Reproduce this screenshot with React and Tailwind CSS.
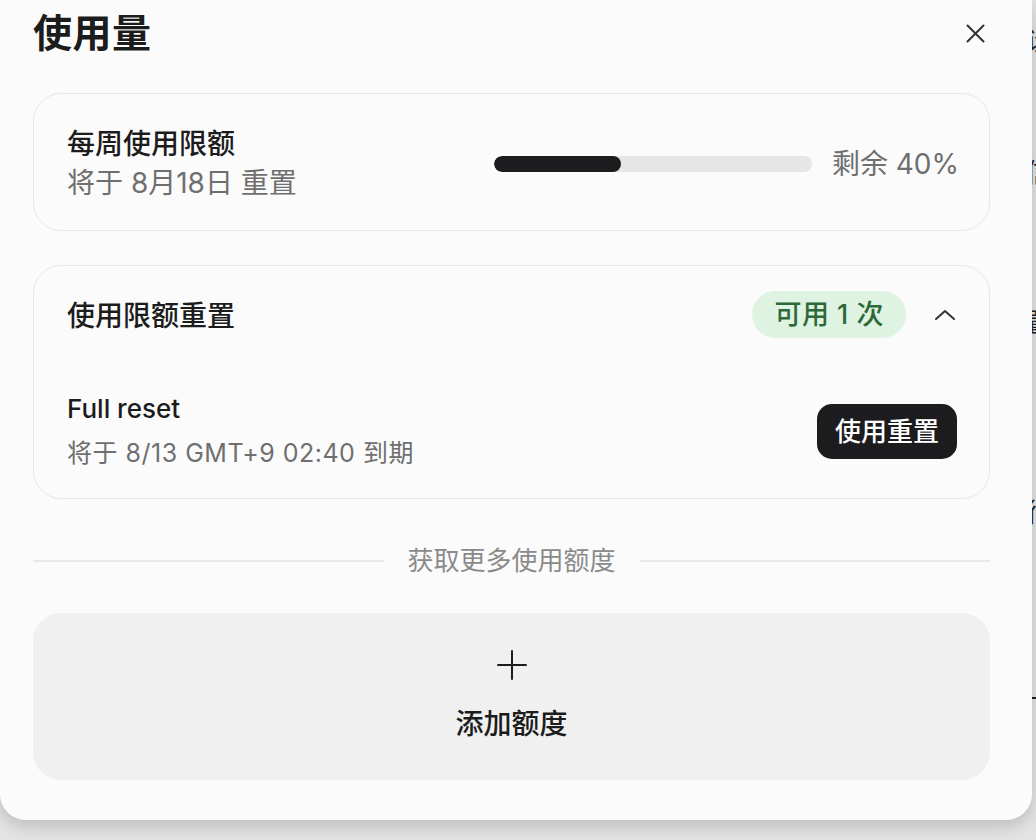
import React from "react";

const FONT = { fontFamily: 'Inter, "Noto Sans CJK SC", "Noto Sans", sans-serif' };

export default function App() {
  return (
    <div className="relative w-[1036px] h-[840px] overflow-hidden bg-[#e4e4e4]" style={FONT}>
      {/* page behind the modal */}
      <div className="absolute left-[1026px] top-0 flex flex-col text-[26px] text-[#222] leading-none">
        <span className="mt-[28px]">设</span>
        <span className="mt-[106px]">信</span>
        <span className="mt-[124px]">置</span>
        <span className="mt-[164px]">行</span>
        <span className="mt-[160px]">一</span>
      </div>

      {/* modal */}
      <div className="absolute left-0 top-0 w-[1032px] h-[820px] rounded-b-[26px] bg-[#fbfbfb] shadow-[0_6px_18px_rgba(0,0,0,0.18)] pl-[33px] pr-[42px] flex flex-col">
        <div className="mt-[7px] h-[52px] flex items-center justify-between">
          <h1 className="text-[39px] font-bold text-[#1c1c1c] leading-[52px] tracking-[0.5px]">使用量</h1>
          <button className="w-[30px] h-[30px] flex items-center justify-center text-[#333]">
            <svg width="19" height="19" viewBox="0 0 19 19" fill="none" stroke="currentColor" strokeWidth="2" strokeLinecap="round">
              <path d="M1.5 1.5 L17.5 17.5 M17.5 1.5 L1.5 17.5" />
            </svg>
          </button>
        </div>

        {/* weekly limit card */}
        <div className="mt-[34px] h-[138px] rounded-[28px] border-[1.5px] border-[#e6e6e6] pl-[33px] pr-[30px] pt-[4px] flex items-center justify-between">
          <div className="flex flex-col">
            <div className="text-[28px] leading-[39px] font-medium text-[#1c1c1c]">每周使用限额</div>
            <div className="text-[28px] leading-[39px] text-[#6f6f6f]">将于 8月18日 重置</div>
          </div>
          <div className="flex items-center gap-[20px]">
            <div className="w-[318px] h-[16px] rounded-full bg-[#e6e6e6] overflow-hidden">
              <div className="h-full rounded-full bg-[#1c1c1f]" style={{ width: "40%" }} />
            </div>
            <div className="text-[28px] leading-[39px] text-[#6f6f6f]">剩余 40%</div>
          </div>
        </div>

        {/* reset card */}
        <div className="mt-[34px] rounded-[28px] border-[1.5px] border-[#e6e6e6] pl-[33px] pr-[32px] pt-[25px] pb-[25px] flex flex-col">
          <div className="h-[47px] flex items-center justify-between">
            <div className="pt-[4px] text-[28px] leading-[39px] font-medium text-[#1c1c1c]">使用限额重置</div>
            <div className="flex items-center">
              <div className="h-[47px] px-[22px] rounded-full bg-[#dff3e2] text-[#2d6a37] text-[27px] leading-[47px] font-medium tracking-[0.5px]">可用 1 次</div>
              <div className="ml-[27px] w-[24px] h-[24px] flex items-center justify-center text-[#333]">
                <svg width="22" height="12" viewBox="0 0 22 12" fill="none" stroke="currentColor" strokeWidth="2" strokeLinecap="round" strokeLinejoin="round">
                  <path d="M2 10 L11 2 L20 10" />
                </svg>
              </div>
            </div>
          </div>
          <div className="mt-[51px] flex items-center justify-between">
            <div className="flex flex-col">
              <div className="text-[26px] leading-[40px] font-medium text-[#1c1c1c]">Full reset</div>
              <div className="mt-[4px] text-[25px] leading-[40px] text-[#6f6f6f] tracking-[0.5px]">将于 8/13 GMT+9 02:40 到期</div>
            </div>
            <button className="h-[55px] px-[18px] rounded-[15px] bg-[#1c1c1f] text-white text-[26px] font-medium leading-[55px]">使用重置</button>
          </div>
        </div>

        {/* divider */}
        <div className="mt-[42px] h-[40px] flex items-center gap-[24px]">
          <div className="flex-1 h-[2px] bg-[#e8e8e8]" />
          <div className="text-[26px] leading-[40px] text-[#8a8a8a]">获取更多使用额度</div>
          <div className="flex-1 h-[2px] bg-[#e8e8e8]" />
        </div>

        {/* add credit */}
        <button className="mt-[32px] h-[167px] rounded-[28px] bg-[#f0f0f0] flex flex-col items-center justify-center">
          <svg width="30" height="30" viewBox="0 0 30 30" fill="none" stroke="#1c1c1c" strokeWidth="2" strokeLinecap="round">
            <path d="M15 1 L15 29 M1 15 L29 15" />
          </svg>
          <div className="mt-[24px] text-[28px] leading-[40px] font-medium text-[#1c1c1c]">添加额度</div>
        </button>
      </div>
    </div>
  );
}
